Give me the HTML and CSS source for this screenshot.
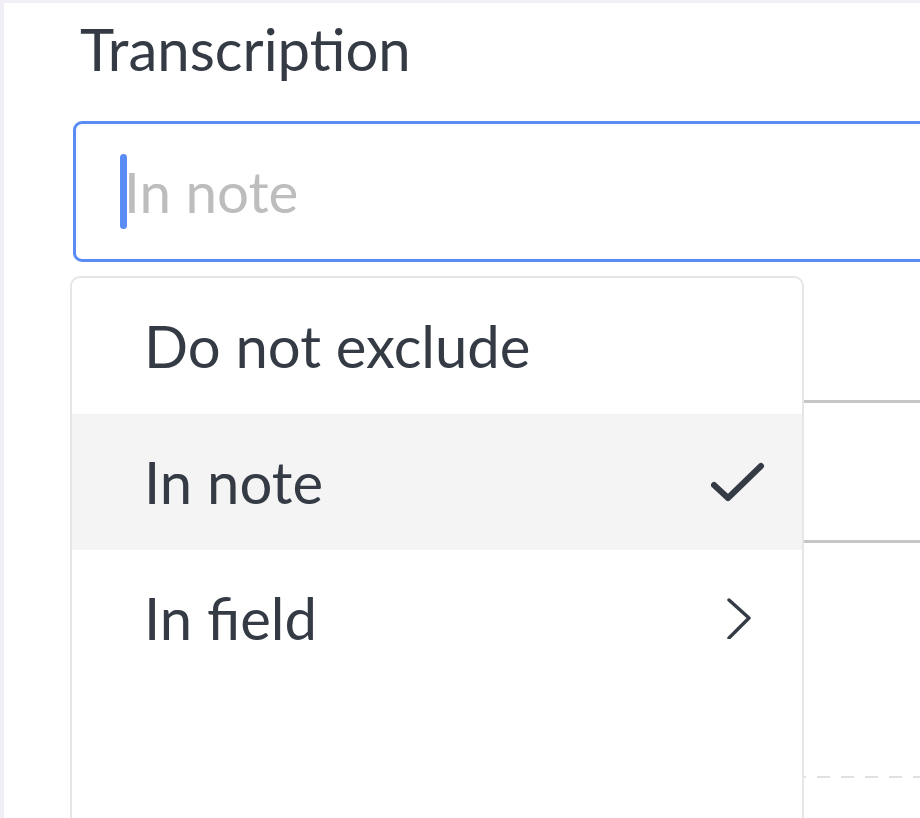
FILE: index.html
```html
<!DOCTYPE html>
<html lang="en">
<head>
<meta charset="utf-8">
<title>Transcription</title>
<link rel="stylesheet" href="styles.css">
</head>
<body>
<div class="panel">
  <div class="label">Transcription</div>
  <div class="field">
    <span class="caret"></span>
    <span class="placeholder">In note</span>
  </div>
  <div class="bg-rows">
    <div class="bg-line first"></div>
    <div class="bg-line second"></div>
    <div class="bg-dash"></div>
  </div>
  <div class="menu">
    <div class="item">
      <span class="item-text">Do not exclude</span>
      <span class="slot"></span>
    </div>
    <div class="item active">
      <span class="item-text">In note</span>
      <span class="slot">
        <svg width="54" height="42" viewBox="0 0 54 42"><polyline points="3,24 17,37 50,5" fill="none" stroke="#353b45" stroke-width="6" stroke-linecap="round" stroke-linejoin="round"/></svg>
      </span>
    </div>
    <div class="item">
      <span class="item-text">In field</span>
      <span class="slot">
        <svg width="54" height="42" viewBox="0 0 54 42"><polyline points="18,3 38,21 18,41" fill="none" stroke="#353b45" stroke-width="3.4" stroke-linecap="round" stroke-linejoin="round"/></svg>
      </span>
    </div>
  </div>
</div>
</body>
</html>
```

FILE: styles.css
```css
html, body {
  margin: 0;
  padding: 0;
  height: 100%;
  overflow: hidden;
}

body {
  background: #f1eef7;
  font-family: Lato, "Liberation Sans", sans-serif;
  color: #353b45;
}

.panel {
  position: relative;
  margin: 3px 0 0 4px;
  width: 1300px;
  height: 900px;
  background: #ffffff;
  padding: 10px 0 0 69px;
  box-sizing: border-box;
}

.label {
  font-size: 58px;
  line-height: 72px;
  padding-left: 7px;
}

.field {
  margin-top: 36px;
  height: 141px;
  box-sizing: border-box;
  border: 3px solid #5a8cf3;
  border-radius: 9px;
  display: flex;
  align-items: center;
  padding-left: 44px;
}

.caret {
  flex-shrink: 0;
  width: 7px;
  height: 75px;
  border-radius: 4px;
  background: #5a8cf3;
  position: relative;
  z-index: 1;
}

.placeholder {
  font-size: 56.5px;
  color: #bdbdbd;
  margin-left: -3px;
  line-height: 1;
}

.bg-rows {
  display: flex;
  flex-direction: column;
}

.bg-line {
  height: 3px;
  background: #c6c6c6;
}

.bg-line.first {
  margin-top: 138px;
}

.bg-line.second {
  margin-top: 137px;
}

.bg-dash {
  margin-top: 233px;
  height: 2px;
  background: repeating-linear-gradient(to right, #e0e0e0 0 13px, transparent 13px 24px);
}

.menu {
  position: absolute;
  left: 66px;
  top: 273px;
  width: 734px;
  height: 600px;
  box-sizing: border-box;
  background: #ffffff;
  border: 2px solid #e6e6e6;
  border-radius: 10px;
  overflow: hidden;
  z-index: 2;
}

.item {
  height: 136px;
  display: flex;
  align-items: center;
  justify-content: space-between;
  padding: 0 37px 0 72px;
}

.item.active {
  background: #f4f4f4;
}

.item-text {
  font-size: 58px;
  line-height: 136px;
}

.slot {
  width: 54px;
  height: 42px;
  display: flex;
}
```
